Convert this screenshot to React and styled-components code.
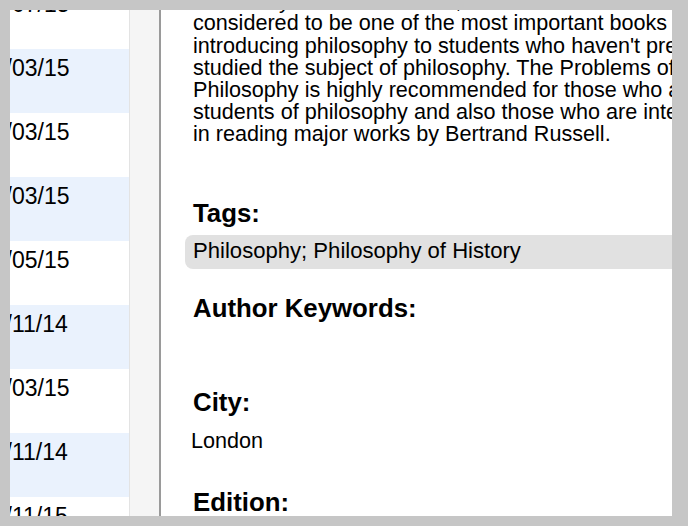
import React from "react";
import styled, { createGlobalStyle } from "styled-components";

/*
 * Styles
 */

const GlobalStyle = createGlobalStyle`
  html, body {
    margin: 0;
    padding: 0;
  }
  body {
    background: #c6c6c6;
    color: #000;
    font-family: "Liberation Sans", Arial, Helvetica, sans-serif;
  }
`;

export const Frame = styled.div`
  box-sizing: border-box;
  width: 688px;
  height: 526px;
  padding: 10px 16px 10px 10px;
  background: #c6c6c6;
`;

export const Window = styled.div`
  display: flex;
  height: 100%;
  background: #ffffff;
  overflow: hidden;
`;

export const DateList = styled.div`
  flex: none;
  width: 119px;
  overflow: hidden;
`;

export const DateRows = styled.ul`
  list-style: none;
  margin: -25px 0 0 -30px;
  padding: 0;
`;

export const DateRow = styled.li`
  box-sizing: border-box;
  height: 64px;
  padding-top: 5px;
  font-size: 23px;
  line-height: 28px;
  white-space: nowrap;
  background: ${(p) => (p.$striped ? "#eaf2fd" : "#ffffff")};
`;

export const ScrollTrack = styled.div`
  flex: none;
  width: 29px;
  border-left: 1px solid #e3e3e3;
  background: #f5f5f5;
`;

export const Divider = styled.div`
  flex: none;
  width: 2px;
  background: #9a9a9a;
`;

export const Details = styled.div`
  flex: 1;
  min-width: 0;
  overflow: hidden;
`;

export const Content = styled.div`
  width: 560px;
  margin-top: -19.8px;
  padding-left: 32px;
`;

export const Description = styled.p`
  margin: 0;
  font-size: 21.6px;
  line-height: 22.2px;
  white-space: nowrap;
`;

export const Field = styled.section`
  margin-top: ${(p) => (p.$first ? "52px" : "24px")};
`;

export const Label = styled.h3`
  margin: 0;
  font-size: 25.8px;
  font-weight: bold;
  line-height: 30px;
`;

export const Value = styled.div`
  box-sizing: border-box;
  margin-top: 7px;
  min-height: ${(p) => (p.$boxed ? "34px" : "33px")};
  font-size: 21.6px;
  white-space: nowrap;
  ${(p) =>
    p.$boxed
      ? `
    margin-left: -8px;
    padding: 0 8px 3px;
    font-size: 22.1px;
    line-height: 31px;
    background: #e1e1e1;
    border-radius: 8px;
  `
      : `
    margin-left: -2px;
    margin-top: ${p.$empty ? "7px" : "9px"};
    padding-bottom: ${p.$empty ? "0" : "8px"};
    line-height: 29px;
  `}
`;

/*
 * Data
 */

const dates = [
  "12/07/15",
  "12/03/15",
  "12/03/15",
  "12/03/15",
  "12/05/15",
  "12/11/14",
  "12/03/15",
  "12/11/14",
  "12/11/15",
];

const description = [
  "Written by Bertrand Russell, The Problems of Philosophy is",
  "considered to be one of the most important books in",
  "introducing philosophy to students who haven't previously",
  "studied the subject of philosophy. The Problems of",
  "Philosophy is highly recommended for those who are",
  "students of philosophy and also those who are interested",
  "in reading major works by Bertrand Russell.",
];

/*
 * Component
 */

class App extends React.Component {
  render() {
    return (
      <>
        <GlobalStyle />
        <Frame>
          <Window>
            <DateList>
              <DateRows>
                {dates.map((d, i) => (
                  <DateRow key={i} $striped={i % 2 === 1}>
                    {d}
                  </DateRow>
                ))}
              </DateRows>
            </DateList>
            <ScrollTrack />
            <Divider />
            <Details>
              <Content>
                <Description>
                  {description.map((line, i) => (
                    <React.Fragment key={i}>
                      {line}
                      {i < description.length - 1 && <br />}
                    </React.Fragment>
                  ))}
                </Description>

                <Field $first>
                  <Label>Tags:</Label>
                  <Value $boxed>Philosophy; Philosophy of History</Value>
                </Field>

                <Field>
                  <Label>Author Keywords:</Label>
                  <Value $empty />
                </Field>

                <Field>
                  <Label>City:</Label>
                  <Value>London</Value>
                </Field>

                <Field>
                  <Label>Edition:</Label>
                  <Value $empty />
                </Field>
              </Content>
            </Details>
          </Window>
        </Frame>
      </>
    );
  }
}

export default App;
